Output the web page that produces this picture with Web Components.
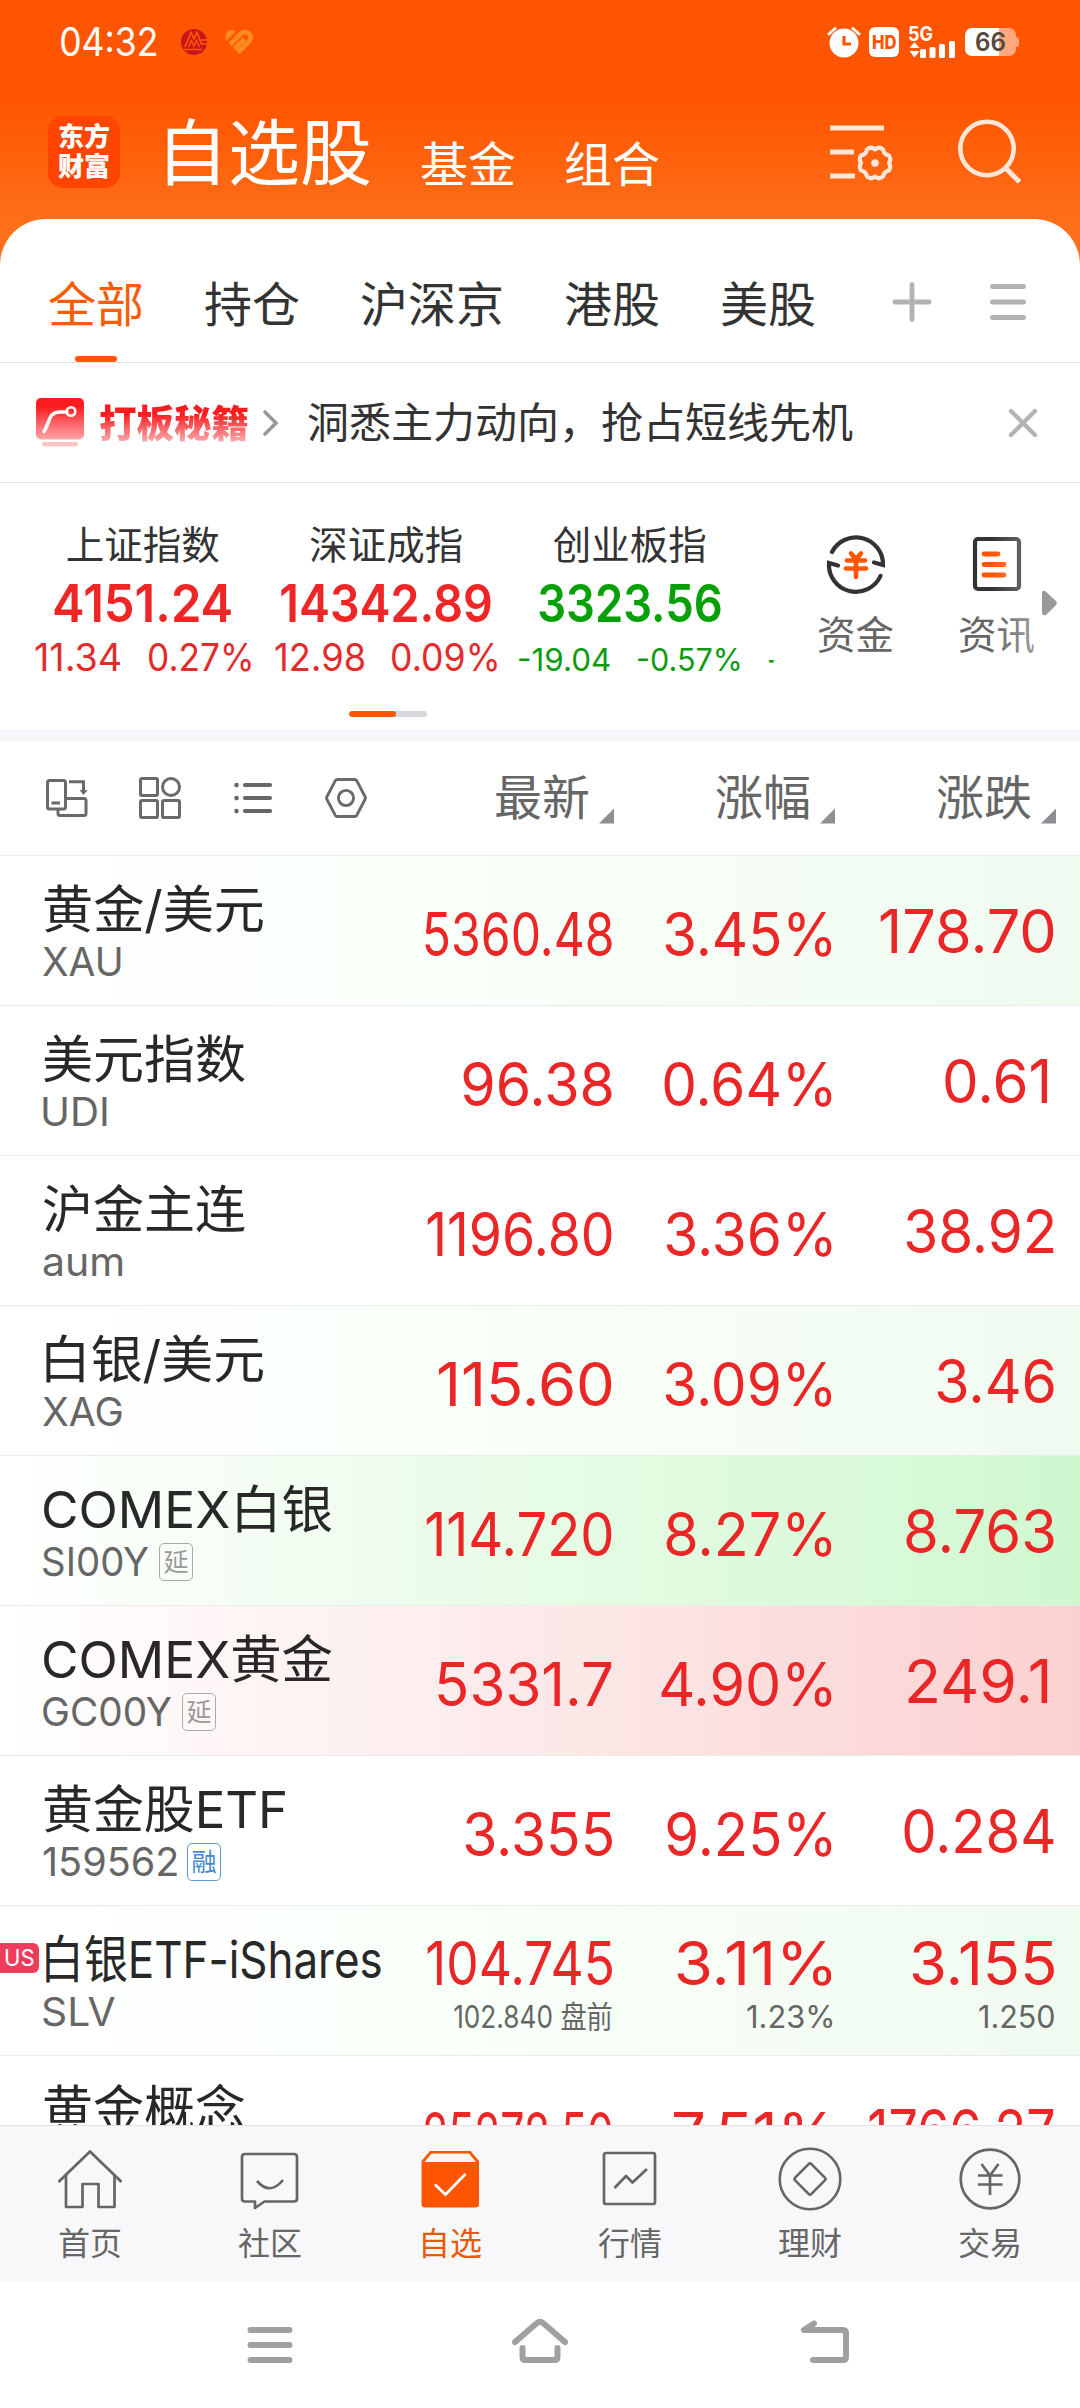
<!DOCTYPE html>
<html lang="zh-CN">
<head>
<meta charset="utf-8">
<title>自选股</title>
<style>
  body {
    margin: 0;
    background: #fff;
    color: #282828;
    font-family: Inter, "Noto Sans CJK SC", sans-serif;
  }
</style>
</head>
<body>
<app-screen></app-screen>

<script>
// Small helper: parse the markup once, every instance clones it
function makeTemplate(html) {
  const template = document.createElement("template");
  template.innerHTML = html;
  return template;
}

const icons = {
  bank: `<svg width="28" height="28" viewBox="0 0 28 28"><circle cx="14" cy="14" r="13" fill="#c9161d"/><path d="M5 19 L11 4.500 L14 11 L17 4.500 L22 17" fill="none" stroke="#ff5500" stroke-width="1.700"/><path d="M8.500 19 L11.500 12.500 L14 18 L16.500 12.500 L19.500 19" fill="none" stroke="#ff5500" stroke-width="1.400"/><path d="M4 21.500h18M21 12h7M22 16h6" stroke="#ff5500" stroke-width="1.700"/></svg>`,
  heart: `<svg width="30" height="26" viewBox="0 0 30 26" fill="none" stroke="#ff8a1e" stroke-width="4.600"><path d="M2.500 11 L10.500 3 Q6 0.500 3.500 3.500 Q1 7 2.500 11z" fill="#ff8a1e" stroke-width="1.500"/><path d="M6 15.500 L16.500 5 Q21 1.500 25 4.500 Q28.500 8.500 25 12.500 L14 23.500"/><path d="M10.500 20 L20.500 10"/></svg>`,
  alarm: `<svg width="34" height="32" viewBox="0 0 34 32"><circle cx="17" cy="17" r="14.500" fill="#fff"/><path d="M2 8 L8 2.500 M32 8 L26 2.500" stroke="#fff" stroke-width="3" stroke-linecap="round"/><path d="M17 10v8h7" fill="none" stroke="#ff5500" stroke-width="3.200"/></svg>`,
  signal: `<svg width="46" height="17" viewBox="0 0 46 17" fill="#fff"><path d="M0.500 7 L5.500 1 L10.500 7z M0.500 10 L5.500 16.500 L10.500 10z"/><rect x="11" y="8" width="6" height="9" rx="1.500"/><rect x="20.500" y="6" width="6" height="11" rx="1.500"/><rect x="30" y="3" width="6" height="14" rx="1.500"/><rect x="40" y="0" width="6" height="17" rx="1.500"/></svg>`,
  filter: `<svg width="64" height="60" viewBox="0 0 64 60" fill="none" stroke="#ffe6d8" stroke-width="5"><path d="M0 6h54M0 30h24M0 54h25"/><path d="M45 27.500 Q49 24 53 27.500 Q54 32.500 59 33.500 Q61.500 37.500 59 41 Q61.500 44.500 59 48.500 Q54 49.500 53 54.500 Q49 58 45 54.500 Q41 58 37 54.500 Q36 49.500 31 48.500 Q28.500 44.500 31 41 Q28.500 37.500 31 33.500 Q36 32.500 37 27.500 Q41 24 45 27.500z" stroke-width="4.200" stroke-linejoin="round"/><circle cx="45" cy="41" r="3.800" fill="#ffe6d8" stroke="none"/></svg>`,
  search: `<svg width="64" height="66" viewBox="0 0 64 66" fill="none" stroke="#ffe6d8" stroke-width="4.600"><circle cx="29" cy="29.500" r="26.700"/><path d="M47.500 49 L61.500 63" stroke-width="5"/></svg>`,
  plus: `<svg width="40" height="40" viewBox="0 0 40 40" stroke="#b3b3b3" stroke-width="4.800" stroke-linecap="round"><path d="M20 2.500v35M3 20h34"/></svg>`,
  menu: `<svg width="36" height="38" viewBox="0 0 36 38" stroke="#b3b3b3" stroke-width="5" stroke-linecap="round"><path d="M2.500 3.500h31M2.500 19h31M2.500 34.500h31"/></svg>`,
  promo: `<svg width="48" height="50" viewBox="0 0 48 50"><defs><linearGradient id="p" x1="0" y1="0" x2="0" y2="1"><stop offset=".2" stop-color="#fc1c20"/><stop offset="1" stop-color="#fba6a8"/></linearGradient></defs><rect width="48" height="41.500" rx="5" fill="url(#p)"/><path d="M8 33.500 C14 25 12 14 24 14 H31" fill="none" stroke="#fff" stroke-width="3.600" stroke-linecap="round"/><circle cx="35" cy="13.500" r="4.300" fill="none" stroke="#fff" stroke-width="2.600"/><rect x="6" y="44" width="36" height="4.500" rx="2" fill="#fbc4c6"/></svg>`,
  chevron: `<svg width="16" height="28" viewBox="0 0 16 28" fill="none" stroke="#999" stroke-width="3.600" stroke-linecap="round"><path d="M2 3 L13 14 L2 25"/></svg>`,
  close: `<svg width="30" height="30" viewBox="0 0 30 30" stroke="#b3b3b3" stroke-width="4.400" stroke-linecap="round"><path d="M3 3 L27 27 M27 3 L3 27"/></svg>`,
  fund: `<svg width="60" height="60" viewBox="0 0 60 60" fill="none" stroke="#333" stroke-width="4.200" stroke-linecap="round"><path d="M6 18 A27 27 0 0 1 57 31 L48 28.500"/><path d="M54.500 42 A27 27 0 0 1 3 29 L12 31.500"/><path d="M25 19.500 L30 25 L35 19.500 M21 26.500h18M20 34.500h20M30 26v17" stroke="#ff5500" stroke-width="4.600"/></svg>`,
  news: `<svg width="60" height="60" viewBox="0 0 60 60" fill="none" stroke="#333" stroke-width="4.200" stroke-linecap="round"><rect x="8" y="5" width="44" height="50" rx="3"/><path d="M17 20h14M17 30.500h20M17 41h20" stroke="#ff5500" stroke-width="4.800"/></svg>`,
  rotate: `<svg width="42" height="42" viewBox="0 0 42 42" fill="none" stroke="#6a6a6a" stroke-width="3"><rect x="1.500" y="3.500" width="18" height="28.500" rx="2"/><path d="M5.500 26h8.500M12 32.500v4q0 2 2 2h24q2 0 2-2V23.500q0-2-2-2H20M23 4.800h14.500v9"/><path d="M33.500 13 L41.500 13 L37.500 18z" fill="#6a6a6a" stroke="none"/></svg>`,
  grid: `<svg width="42" height="42" viewBox="0 0 42 42" fill="none" stroke="#6a6a6a" stroke-width="3"><rect x="1.500" y="1.500" width="17" height="17" rx="1.500"/><circle cx="32" cy="10" r="8.500"/><rect x="1.500" y="23.500" width="17" height="17" rx="1.500"/><rect x="23.500" y="23.500" width="17" height="17" rx="1.500"/></svg>`,
  list: `<svg width="42" height="42" viewBox="0 0 42 42" stroke="#666" stroke-width="4.200" stroke-linecap="round"><path d="M4.500 8v.1M4.500 21v.1M4.500 34v.1" stroke-width="4.600"/><path d="M13 8h25M13 21h25M13 34h25"/></svg>`,
  hex: `<svg width="42" height="42" viewBox="0 0 42 42" fill="none" stroke="#6a6a6a" stroke-width="2.900" stroke-linejoin="round"><path d="M12.500 2.500h17q1.500 0 2.300 1.300L40 19.500q.800 1.500 0 3L31.800 38.200q-.800 1.300-2.300 1.300h-17q-1.500 0-2.300-1.300L2 22.500q-.800-1.500 0-3L10.200 3.800q.800-1.300 2.300-1.300z"/><circle cx="21" cy="21" r="7.600"/></svg>`,
  home: `<svg width="64" height="64" viewBox="0 0 64 64" fill="none" stroke="#666" stroke-width="2.700" stroke-linejoin="round"><path d="M0.500 35 L32 4.500 L63.500 35"/><path d="M8 28V60H24.500V37H40.500V60H56.500V28"/></svg>`,
  chat: `<svg width="64" height="64" viewBox="0 0 64 64" fill="none" stroke="#666" stroke-width="2.700" stroke-linejoin="round"><path d="M7 7h49q3 0 3 3v41.500q0 3-3 3H26.500L17 61V54.500H7q-3 0-3-3V10q0-3 3-3z"/><path d="M19 34 Q32 49 45 33"/></svg>`,
  pick: `<svg width="64" height="64" viewBox="0 0 64 64"><path d="M3.500 14 L12 4 H52.500 L61 14 V57 q0 3.500-3.500 3.500 H7 Q3.500 60.500 3.500 57z" fill="#ff5500"/><path d="M13.500 6.500 H51 L58 15H6.500z" fill="#fff5ef"/><path d="M17 37.500 L27.500 47.500 L47.500 27" fill="none" stroke="#fff" stroke-width="2.800"/></svg>`,
  chart: `<svg width="64" height="64" viewBox="0 0 64 64" fill="none" stroke="#666" stroke-width="2.700" stroke-linejoin="round"><rect x="6" y="6" width="51" height="51" rx="2"/><path d="M16.500 41 L28 29 L34.500 35.500 L49 22"/></svg>`,
  coin: `<svg width="64" height="64" viewBox="0 0 64 64" fill="none" stroke="#666" stroke-width="2.600" stroke-linejoin="round"><circle cx="32" cy="32" r="30.300"/><rect x="20.500" y="20.500" width="23" height="23" rx="2" transform="rotate(45 32 32)"/></svg>`,
  yen: `<svg width="64" height="64" viewBox="0 0 64 64" fill="none" stroke="#666" stroke-width="2.700"><circle cx="32" cy="32" r="29.300"/><path d="M23.500 17 L32 28.500 L40.500 17M20 28.500h24.500M20 37.500h24.500M32 28v20"/></svg>`,
  recents: `<svg width="60" height="60" viewBox="0 0 60 60" stroke="#a0a0a0" stroke-width="6" stroke-linecap="round"><path d="M10.500 15h39M10.500 30h39M10.500 45h39"/></svg>`,
  launcher: `<svg width="60" height="60" viewBox="0 0 60 60" fill="none" stroke="#a0a0a0" stroke-width="6" stroke-linecap="round"><path d="M5 27 L27 8 Q30 5.500 33 8 L55 27"/><path d="M12.500 33v9q0 3 3 3h29q3 0 3-3v-9"/></svg>`,
  back: `<svg width="60" height="60" viewBox="0 0 60 60" fill="none" stroke="#a0a0a0" stroke-width="6" stroke-linecap="round" stroke-linejoin="round"><path d="M15 8.500 L5 15 H44q3 0 3 3V42q0 3-3 3H14"/></svg>`
};

const fitTextTemplate = makeTemplate(`
  <style>
    :host { display: inline-block; white-space: nowrap; }
    span { display: inline-block; transform-origin: 0 50%; }
  </style>
  <span><slot></slot></span>`);

const measureContext = document.createElement("canvas").getContext("2d");

class FitText extends HTMLElement {
  constructor() {
    super();
    this.attachShadow({ mode: "open" }).appendChild(fitTextTemplate.content.cloneNode(true));
  }

  connectedCallback() {
    const width = Number(this.getAttribute("w"));
    const style = getComputedStyle(this);
    measureContext.font = `${style.fontWeight} ${style.fontSize} ${style.fontFamily}`;
    const box = measureContext.measureText(this.textContent);
    const scale = width / (box.actualBoundingBoxLeft + box.actualBoundingBoxRight);
    this.style.width = width + "px";
    this.shadowRoot.querySelector("span").style.transform =
      `translateX(${box.actualBoundingBoxLeft * scale}px) scaleX(${scale})`;
  }
}

// Phone status bar: clock and notifications left, system icons right
const statusBarTemplate = makeTemplate(`
  <style>
    :host { display: flex; align-items: center; height: 84px; padding: 0 61px 0 61px; color: #fff; }
    .time { font-size: 39px; line-height: 84px; }
    .bank { margin-left: 24px; height: 28px; }
    .heart { margin-left: 16px; height: 26px; }
    .right { display: flex; align-items: center; margin-left: auto; }
    .alarm { height: 32px; }
    .hd { width: 30px; height: 30px; margin-left: 8px; border-radius: 6px; background: #fff;
          color: #ff5500; font-size: 19px; line-height: 31px; text-align: center; font-weight: 800; }
    .net { display: flex; flex-direction: column; width: 46px; height: 31px; margin-left: 10px; }
    .net b { font-size: 20px; line-height: 14px; height: 14px; font-weight: 700; }
    .net svg { display: block; }
    .battery { display: flex; align-items: center; margin-left: 10px; }
    .cell { width: 51px; height: 28px; border-radius: 7px; text-align: center; color: #55483f;
            background: linear-gradient(90deg, #fff 34px, #ffa77d 34px);
            font-size: 25px; line-height: 29px; font-weight: 600; }
    .tip { width: 3px; height: 10px; border-radius: 0 3px 3px 0; background: #ffa77d; }
  </style>
  <fit-text class="time" w="95">04:32</fit-text>
  <div class="bank">${icons.bank}</div>
  <div class="heart">${icons.heart}</div>
  <div class="right">
    <div class="alarm">${icons.alarm}</div>
    <div class="hd"><fit-text w="23">HD</fit-text></div>
    <div class="net"><b><fit-text w="24">5G</fit-text></b>${icons.signal}</div>
    <div class="battery"><div class="cell"><fit-text w="29">66</fit-text></div><div class="tip"></div></div>
  </div>`);

class StatusBar extends HTMLElement {
  constructor() {
    super();
    this.attachShadow({ mode: "open" }).appendChild(statusBarTemplate.content.cloneNode(true));
  }
}

const titleBarTemplate = makeTemplate(`
  <style>
    :host { display: flex; align-items: center; height: 135px; padding: 0 58px 0 48px; color: #fff; }
    .logo { display: flex; flex-direction: column; justify-content: center; width: 72px; height: 72px;
            border-radius: 15px; background: #ff4500; text-align: center;
            font-weight: 900; font-size: 26px; line-height: 30px; }
    .titles { display: flex; align-items: flex-end; gap: 48px; margin: 3px 0 0 36px; font-size: 48px; line-height: 48px; }
    .active { font-size: 72px; line-height: 72px; }
    .tools { display: flex; align-items: center; margin-left: auto; gap: 64px; }
    .tools svg { display: block; }
  </style>
  <div class="logo"><span>东方</span><span>财富</span></div>
  <div class="titles"><span class="active">自选股</span><span>基金</span><span>组合</span></div>
  <div class="tools">${icons.filter}${icons.search}</div>`);

class TitleBar extends HTMLElement {
  constructor() {
    super();
    this.attachShadow({ mode: "open" }).appendChild(titleBarTemplate.content.cloneNode(true));
  }
}

const groupTabsTemplate = makeTemplate(`
  <style>
    :host { display: flex; align-items: center; gap: 60px; box-sizing: border-box; height: 144px;
            padding: 26px 54px 0 48px; border-bottom: 1px solid #e5e5e5; background: #fff;
            border-radius: 46px 46px 0 0; color: #333; font-size: 48px; line-height: 115px; }
    span { padding-top: 2px; }
    .active { position: relative; color: #f75c08; }
    .active::after { content: ""; position: absolute; left: 27px; bottom: 0; width: 42px; height: 6px;
                     border-radius: 3px; background: #ff5500; }
    .tools { display: flex; align-items: center; gap: 58px; margin-left: auto; margin-top: -3px; }
    .tools svg { display: block; }
  </style>
  <span class="active">全部</span><span>持仓</span><span>沪深京</span><span>港股</span><span>美股</span>
  <div class="tools">${icons.plus}${icons.menu}</div>`);

class GroupTabs extends HTMLElement {
  constructor() {
    super();
    this.attachShadow({ mode: "open" }).appendChild(groupTabsTemplate.content.cloneNode(true));
  }
}

const promoBarTemplate = makeTemplate(`
  <style>
    :host { display: flex; align-items: center; box-sizing: border-box; height: 120px;
            padding: 0 42px 0 36px; border-bottom: 1px solid #e5e5e5; color: #333; }
    svg { display: block; }
    .brand { margin: -4px 0 0 15px; font-family: "Noto Sans CJK SC", sans-serif; font-weight: 900; font-size: 37.500px; line-height: 44px;
             color: transparent; background: linear-gradient(#fc1c20 35%, #fba6a8 95%);
             -webkit-background-clip: text; background-clip: text; }
    .arrow { margin-left: 14px; }
    .message { margin-left: 28px; font-size: 42px; line-height: 60px; }
    .close { margin-left: auto; }
  </style>
  ${icons.promo}
  <span class="brand">打板秘籍</span>
  <div class="arrow">${icons.chevron}</div>
  <span class="message">洞悉主力动向，抢占短线先机</span>
  <div class="close">${icons.close}</div>`);

class PromoBar extends HTMLElement {
  constructor() {
    super();
    this.attachShadow({ mode: "open" }).appendChild(promoBarTemplate.content.cloneNode(true));
  }
}

// One market index: the label and the numbers are slotted
const indexCardTemplate = makeTemplate(`
  <style>
    :host { display: flex; flex: none; flex-direction: column; align-items: center; width: 243.500px; color: #e32b2b; }
    :host([down]) { color: #0f9a12; }
    .label { color: #333; font-size: 38.500px; line-height: 50px; }
    .value { font-size: 51.500px; line-height: 66px; font-weight: 600; color: #ee2626; }
    :host([down]) .value { color: #07a007; }
    .diff { display: flex; gap: 28px; font-size: 37.500px; line-height: 44px; }
    :host([down]) .diff { font-size: 31.500px; line-height: 47px; }
  </style>
  <div class="label"><slot></slot></div>
  <div class="value"><slot name="value"></slot></div>
  <div class="diff"><slot name="diff"></slot></div>`);

class IndexCard extends HTMLElement {
  constructor() {
    super();
    this.attachShadow({ mode: "open" }).appendChild(indexCardTemplate.content.cloneNode(true));
  }
}

const indexPanelTemplate = makeTemplate(`
  <style>
    :host { display: flex; position: relative; box-sizing: border-box; height: 258px;
            border-bottom: 12px solid #f5f7fa; }
    .strip { display: flex; flex-direction: column; align-items: center; width: 775px; }
    .cards { display: flex; box-sizing: border-box; width: 775px; height: 197px; padding: 37px 0 0 21px; overflow: hidden; }
    .next { padding: 116px 0 0 17px; color: #0f9a12; font-size: 31.500px; line-height: 47px; }
    .pager { width: 78px; height: 6px; margin-top: 31px; border-radius: 3px;
             background: #d4d8dd; overflow: hidden; }
    .pager i { display: block; width: 47px; height: 6px; border-radius: 3px; background: #ff5500; }
    .link { display: flex; flex-direction: column; align-items: center; width: 141px; padding-top: 51px;
            color: #666; font-size: 38.500px; line-height: 50px; }
    .link svg { display: block; margin-bottom: 16px; }
    .links { display: flex; margin-left: 10px; }
    .fade { position: absolute; top: 40px; right: 39px; width: 50px; height: 150px;
            background: linear-gradient(90deg, rgba(255,255,255,0), rgba(255,255,255,.4)); }
    .more { position: absolute; top: 107px; right: 23px; }
  </style>
  <div class="strip">
    <div class="cards">
      <index-card>上证指数<fit-text slot="value" w="177">4151.24</fit-text><fit-text slot="diff" w="86">11.34</fit-text><fit-text slot="diff" w="102">0.27%</fit-text></index-card>
      <index-card>深证成指<fit-text slot="value" w="210">14342.89</fit-text><fit-text slot="diff" w="89">12.98</fit-text><fit-text slot="diff" w="105">0.09%</fit-text></index-card>
      <index-card down>创业板指<fit-text slot="value" w="182">3323.56</fit-text><fit-text slot="diff" w="91">-19.04</fit-text><fit-text slot="diff" w="102">-0.57%</fit-text></index-card>
      <div class="next"><fit-text w="5">-</fit-text></div>
    </div>
    <div class="pager"><i></i></div>
  </div>
  <div class="links">
    <div class="link">${icons.fund}<span>资金</span></div>
    <div class="link">${icons.news}<span>资讯</span></div>
  </div>
  <div class="fade"></div>
  <svg class="more" width="16" height="26" viewBox="0 0 16 26"><path d="M1 3 Q1 0 4 1 L15 11 Q16.500 13 15 15 L5 25 Q1 26 1 23z" fill="#999"/></svg>`);

class IndexPanel extends HTMLElement {
  constructor() {
    super();
    this.attachShadow({ mode: "open" }).appendChild(indexPanelTemplate.content.cloneNode(true));
  }
}

const tableHeadTemplate = makeTemplate(`
  <style>
    :host { display: flex; align-items: center; box-sizing: border-box; height: 115px;
            padding: 0 24px 0 46px; border-bottom: 1px solid #ebebeb; color: #666; font-size: 48px; line-height: 114px; }
    .tools { display: flex; gap: 51px; flex: 1; }
    svg { display: block; }
    .col { display: flex; justify-content: flex-end; width: 221px; gap: 9px; }
    .col i { align-self: center; width: 15px; height: 15px; margin-top: 36px; background: #8e8e93;
             clip-path: polygon(100% 0, 100% 100%, 0 100%); }
  </style>
  <div class="tools">${icons.rotate}${icons.grid}${icons.list}${icons.hex}</div>
  <div class="col">最新<i></i></div>
  <div class="col">涨幅<i></i></div>
  <div class="col">涨跌<i></i></div>`);

class TableHead extends HTMLElement {
  constructor() {
    super();
    this.attachShadow({ mode: "open" }).appendChild(tableHeadTemplate.content.cloneNode(true));
  }
}

// One quote. The tint attribute colours the flash behind the row
const quoteRowTemplate = makeTemplate(`
  <style>
    :host { display: grid; grid-template-columns: 340px 1fr 220px 222px; position: relative; box-sizing: border-box;
            height: 150px; padding: 0 26px 0 42px; border-bottom: 1px solid #ebebeb; }
    :host([tint="light"]) { background: linear-gradient(90deg, #fff, #f8fff8 50%, #f0fbf0); }
    :host([tint="green"]) { background: linear-gradient(90deg, #fff, #e7fce6 50%, #cff8cf); }
    :host([tint="red"]) { background: linear-gradient(90deg, #fff, #fde9e9 50%, #fbd0d0); }
    .title { padding-top: 23px; white-space: nowrap; }
    .name { font-size: 51px; line-height: 61px; height: 59px; }
    .name fit-text { margin-left: 1px; }
    .code { display: flex; align-items: center; gap: 10px; padding-left: 1px; height: 47px; color: #666; font-size: 40px; line-height: 47px; }
    .tag { box-sizing: border-box; width: 34px; height: 38px; border: 1px solid #aaa; border-radius: 5px;
           color: #999; font-size: 25px; line-height: 36px; text-align: center; }
    .tag.blue { border-color: #5b9bd8; color: #4488cc; }
    .cell { display: flex; flex-direction: column; align-items: flex-end; padding-top: 2px; color: #ea2626; font-size: 60px; line-height: 147px; }
    .cell.low { padding-top: 5px; }
    .double { padding-top: 22px; line-height: 70px; }
    .double small { margin-top: 1px; color: #666; font-size: 31px; line-height: 36px; }
    .market { position: absolute; left: 0; top: 37px; width: 39px; height: 30px; border-radius: 0 6px 6px 0;
              background: #ee3d5c; color: #fff; font-size: 23px; line-height: 30px; text-align: center; }
    .market fit-text { margin-left: 1px; }
  </style>
  <div class="title"><div class="name"></div><div class="code"></div></div>`);

class QuoteRow extends HTMLElement {
  constructor() {
    super();
    this.attachShadow({ mode: "open" }).appendChild(quoteRowTemplate.content.cloneNode(true));
  }

  set quote(q) {
    const fit = ([text, w, trail]) => `<fit-text w="${w}" style="margin-right:${trail || 0}px">${text}</fit-text>`;
    const root = this.shadowRoot;
    const name = root.querySelector(".name");
    if (q.tint) this.setAttribute("tint", q.tint);
    name.innerHTML = q.nameWidth ? fit([q.name, q.nameWidth]) : q.name;
    name.style.paddingLeft = (q.indent || 0) + "px";
    root.querySelector(".code").innerHTML = fit(q.code) +
      (q.tag ? `<span class="tag ${q.tag === "融" ? "blue" : ""}">${q.tag}</span>` : "");
    if (q.market) {
      const market = document.createElement("div");
      market.className = "market";
      market.innerHTML = fit([q.market, 28]);
      root.appendChild(market);
    }
    q.cells.forEach((cell, i) => {
      const div = document.createElement("div");
      div.className = q.extra ? "cell double" : i < 2 ? "cell low" : "cell";
      div.innerHTML = fit(cell) + (q.extra ? `<small>${fit(q.extra[i])}</small>` : "");
      root.appendChild(div);
    });
  }
}

const quotes = [
  { name: "黄金/美元", nameWidth: 219, indent: 1, code: ["XAU", 78], tint: "light", cells: [["5360.48", 187], ["3.45%", 167], ["178.70", 174]] },
  { name: "美元指数", code: ["UDI", 64], cells: [["96.38", 149], ["0.64%", 168], ["0.61", 103, 6]] },
  { name: "沪金主连", code: ["aum", 79], cells: [["1196.80", 185], ["3.36%", 166], ["38.92", 148]] },
  { name: "白银/美元", nameWidth: 217, indent: 3, code: ["XAG", 79], tint: "light", cells: [["115.60", 174], ["3.09%", 167], ["3.46", 117]] },
  { name: "COMEX白银", nameWidth: 288, indent: 1, code: ["SI00Y", 106], tag: "延", tint: "green", cells: [["114.720", 186], ["8.27%", 166], ["8.763", 148]] },
  { name: "COMEX黄金", nameWidth: 288, indent: 1, code: ["GC00Y", 129], tag: "延", tint: "red", cells: [["5331.7", 174], ["4.90%", 171], ["249.1", 140, 6]] },
  { name: "黄金股ETF", nameWidth: 241, indent: 1, code: ["159562", 134], tag: "融", cells: [["3.355", 147], ["9.25%", 165], ["0.284", 150]] },
  { name: "白银ETF-iShares", nameWidth: 335, indent: 3, code: ["SLV", 72], market: "US", tint: "light",
    cells: [["104.745", 185], ["3.11%", 155], ["3.155", 142]],
    extra: [["102.840 盘前", 158], ["1.23%", 85], ["1.250", 75]] },
  { name: "黄金概念", code: ["BK0547", 134], cells: [["25278.50", 187], ["7.51%", 159], ["1766.27", 185]] }
];

class QuoteList extends HTMLElement {
  constructor() {
    super();
    this.attachShadow({ mode: "open" }).innerHTML = `
      <style>:host { display: block; flex: 1; min-height: 0; overflow: hidden; }</style>`;
  }

  connectedCallback() {
    quotes.forEach((quote) => {
      const row = document.createElement("quote-row");
      this.shadowRoot.appendChild(row);
      row.quote = quote;
    });
  }
}

const tabBarTemplate = makeTemplate(`
  <style>
    :host { display: flex; box-sizing: border-box; height: 157px; border-top: 1px solid #e2e2e6; background: #f8f8fb; }
    div { display: flex; flex: 1; flex-direction: column; align-items: center; padding-top: 21px;
          color: #666; font-size: 32px; line-height: 48px; }
    .active { color: #e8590c; }
    svg { display: block; margin-bottom: 9px; }
  </style>
  <div>${icons.home}首页</div>
  <div>${icons.chat}社区</div>
  <div class="active">${icons.pick}自选</div>
  <div>${icons.chart}行情</div>
  <div>${icons.coin}理财</div>
  <div>${icons.yen}交易</div>`);

class TabBar extends HTMLElement {
  constructor() {
    super();
    this.attachShadow({ mode: "open" }).appendChild(tabBarTemplate.content.cloneNode(true));
  }
}

const systemNavTemplate = makeTemplate(`
  <style>
    :host { display: flex; align-items: center; gap: 210px; height: 126px; padding-left: 240px; background: #fff; }
    svg { display: block; }
    svg:last-child { margin-left: 19px; }
  </style>
  ${icons.recents}${icons.launcher}${icons.back}`);

class SystemNav extends HTMLElement {
  constructor() {
    super();
    this.attachShadow({ mode: "open" }).appendChild(systemNavTemplate.content.cloneNode(true));
  }
}

const appScreenTemplate = makeTemplate(`
  <style>
    :host { display: flex; flex-direction: column; width: 1080px; height: 2408px; overflow: hidden;
            background: linear-gradient(#ff5500 100px, #ff6e19 220px, #ff6e19 300px, #fff 300px); }
  </style>
  <status-bar></status-bar>
  <title-bar></title-bar>
  <group-tabs></group-tabs>
  <promo-bar></promo-bar>
  <index-panel></index-panel>
  <table-head></table-head>
  <quote-list></quote-list>
  <tab-bar></tab-bar>
  <system-nav></system-nav>`);

class AppScreen extends HTMLElement {
  constructor() {
    super();
    this.attachShadow({ mode: "open" }).appendChild(appScreenTemplate.content.cloneNode(true));
  }
}

customElements.define("fit-text", FitText);
customElements.define("status-bar", StatusBar);
customElements.define("title-bar", TitleBar);
customElements.define("group-tabs", GroupTabs);
customElements.define("promo-bar", PromoBar);
customElements.define("index-card", IndexCard);
customElements.define("index-panel", IndexPanel);
customElements.define("table-head", TableHead);
customElements.define("quote-row", QuoteRow);
customElements.define("quote-list", QuoteList);
customElements.define("tab-bar", TabBar);
customElements.define("system-nav", SystemNav);
customElements.define("app-screen", AppScreen);
</script>
</body>
</html>
